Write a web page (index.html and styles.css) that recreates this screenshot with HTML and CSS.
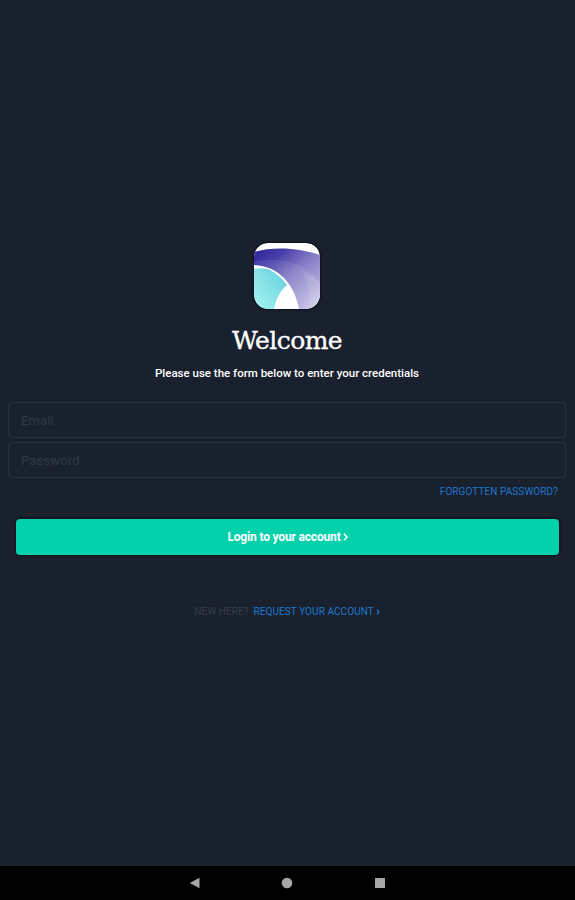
FILE: index.html
```html
<!DOCTYPE html>
<html lang="en">
<head>
  <meta charset="UTF-8">
  <meta name="viewport" content="width=device-width, initial-scale=1">
  <title>Welcome</title>
  <link rel="stylesheet" href="styles.css">
</head>
<body>
  <div class="screen">
    <div class="header">
      <svg class="logo" viewBox="0 0 66 66">
        <defs>
          <clipPath id="tile"><rect width="66" height="66" rx="14"/></clipPath>
          <linearGradient id="arc" x1="0" y1="0" x2="1" y2="1">
            <stop offset="0" stop-color="#2c229e"/>
            <stop offset=".25" stop-color="#4a40aa"/>
            <stop offset=".5" stop-color="#827bc5"/>
            <stop offset=".75" stop-color="#aaa4d8"/>
            <stop offset="1" stop-color="#d3cfeb"/>
          </linearGradient>
          <linearGradient id="fan" x1="0" y1="1" x2="1" y2="0">
            <stop offset="0" stop-color="#a8f5f1"/>
            <stop offset="1" stop-color="#62cedb"/>
          </linearGradient>
        </defs>
        <g clip-path="url(#tile)">
          <rect width="66" height="66" fill="#fff"/>
          <path d="M0 9C20 3 46 5 66 12V66H45C41 43 26 23 0 22Z" fill="url(#arc)"/>
          <path d="M0 19C26 13 54 21 66 39V66H45C41 43 26 23 0 22Z" fill="#fff" opacity=".09"/>
          <path d="M48 28C56 31 62 36 66 41V66H56C56 50 53 37 48 28Z" fill="#fff" opacity=".1"/>
          <path d="M0 26C5 25 10 25 14 26C22 30 29 36 33 42C26 48 22 56 20 66H0Z" fill="url(#fan)"/>
        </g>
      </svg>
      <h1 class="title">Welcome</h1>
      <p class="intro">Please use the form below to enter your credentials</p>
    </div>

    <form class="login">
      <input class="field" type="email" placeholder="Email">
      <input class="field" type="password" placeholder="Password">
      <a href="#" class="link forgotten">FORGOTTEN PASSWORD?</a>
      <button type="button" class="submit">
        <span class="submit-text">Login to your account</span>
        <svg class="chevron" viewBox="0 0 5 8"><path d="M1 .8L4 4L1 7.2"/></svg>
      </button>
    </form>

    <p class="signup">
      <span class="hint">NEW HERE?</span>
      <a href="#" class="link request">REQUEST YOUR ACCOUNT</a>
      <svg class="chevron small" viewBox="0 0 5 8"><path d="M1 .8L4 4L1 7.2"/></svg>
    </p>
  </div>

  <div class="navbar">
    <svg class="nav-icon" viewBox="0 0 12 12"><path d="M.8 6L10.5 .8V11.2Z"/></svg>
    <svg class="nav-icon" viewBox="0 0 12 12"><circle cx="6" cy="6" r="5.3"/></svg>
    <svg class="nav-icon" viewBox="0 0 12 12"><rect x="1" y="1" width="10" height="10"/></svg>
  </div>
</body>
</html>
```
FILE: styles.css
```css
*{
  box-sizing: border-box;
  margin: 0;
  padding: 0;
}

body{
  display: flex;
  flex-direction: column;
  height: 900px;
  overflow: hidden;
  background: #1a212e;
  color: #fff;
  font-family: Roboto, sans-serif;
}

.screen{
  flex: 1;
  padding: 243px 9px 0 8px;
}

.header{
  display: flex;
  flex-direction: column;
  align-items: center;
}

.logo{
  width: 66px;
  height: 66px;
  border-radius: 14px;
  box-shadow: 0 0 2px 1px #0c111b;
}

.title{
  margin-top: 17px;
  font: 400 25px/30px "DejaVu Serif", serif;
  letter-spacing: -.55px;
  -webkit-text-stroke: .35px #fff;
}

.intro{
  margin-top: 9px;
  font-size: 11.5px;
  font-weight: 500;
  line-height: 16px;
  white-space: nowrap;
}

.login{
  display: flex;
  flex-direction: column;
  margin-top: 21px;
}

.field{
  height: 36px;
  margin-bottom: 4px;
  padding: 0 12px;
  border: 1px solid #27313d;
  border-radius: 4px;
  outline: 0;
  background: transparent;
  color: #fff;
  font: 13px Roboto, sans-serif;
  letter-spacing: .15px;
}

.field::placeholder{
  color: #2d3946;
  opacity: 1;
}

.link{
  color: #1b78ce;
  text-decoration: none;
}

.forgotten{
  align-self: flex-end;
  margin: 4px 8px 0 0;
  font-size: 10px;
  line-height: 12px;
  letter-spacing: .08px;
}

.submit{
  display: flex;
  align-items: center;
  justify-content: center;
  gap: 2px;
  height: 36px;
  margin: 21px 7px 0 8px;
  border: 0;
  border-radius: 4px;
  box-shadow: 0 0 2px 1px #0e121f;
  background: #03d1ab;
  color: #fff;
  font: 700 12px Roboto, sans-serif;
  letter-spacing: -.17px;
}

.chevron{
  width: 5px;
  height: 8px;
  fill: none;
  stroke: #fff;
  stroke-width: 1.6;
}

.signup{
  display: flex;
  align-items: center;
  justify-content: center;
  margin-top: 51px;
  font-size: 10px;
  line-height: 12px;
  letter-spacing: .08px;
}

.hint{
  margin-right: 5px;
  color: #343e4b;
}

.small{
  width: 4px;
  height: 6px;
  margin-left: 2px;
  stroke: #1b78ce;
}

.navbar{
  display: flex;
  align-items: center;
  justify-content: center;
  gap: 80.5px;
  height: 34px;
  padding-right: 1px;
  background: #000;
}

.nav-icon{
  width: 12px;
  height: 12px;
  fill: #a6a6a6;
}
```
